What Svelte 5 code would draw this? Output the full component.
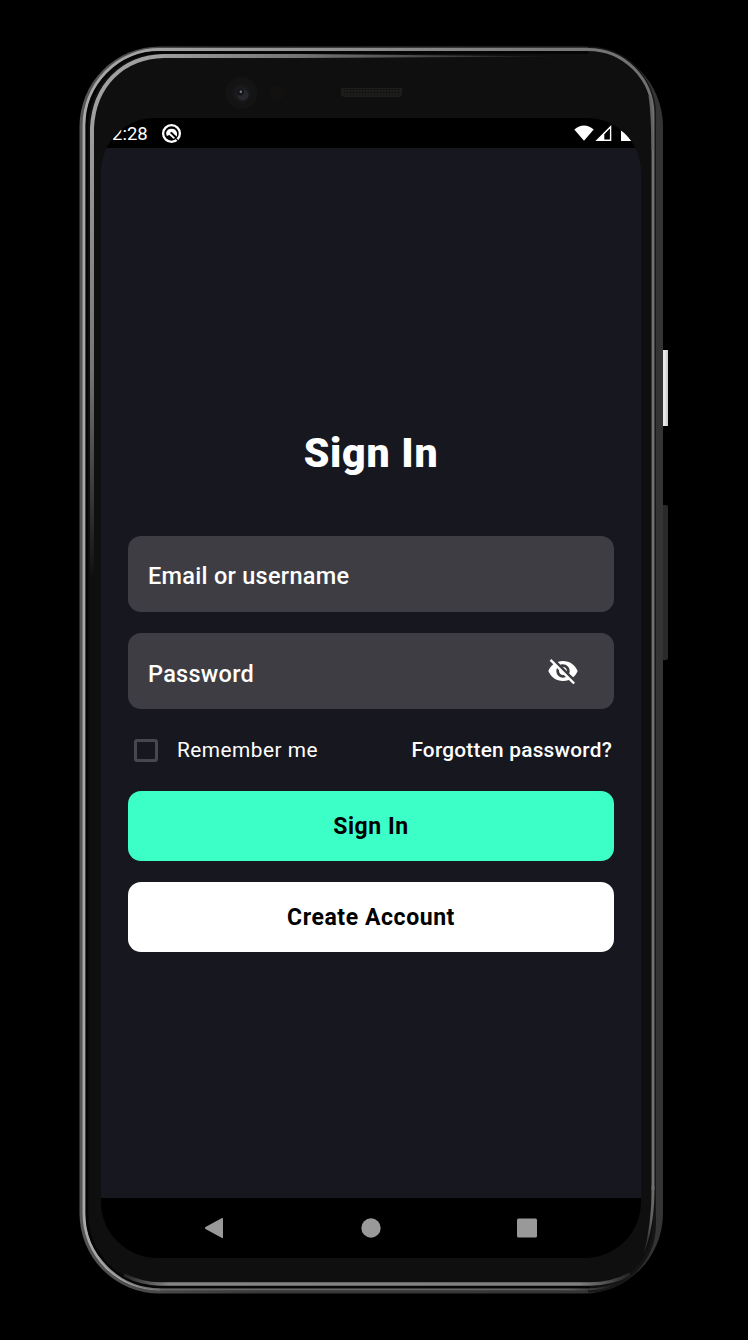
<script>
  let email = $state('Email or username');
  let secret = $state('Password');
  let remember = $state(false);
</script>

<main class="stage">
  <div class="phone">
    <svg class="frame" viewBox="0 0 748 1340" aria-hidden="true">
      <defs>
        <linearGradient id="rim" x1="0" y1="0" x2="1" y2="0">
          <stop offset="0" stop-color="#a8a8a8" />
          <stop offset=".5" stop-color="#8c8c8c" />
          <stop offset="1" stop-color="#707070" />
        </linearGradient>
        <linearGradient id="edge" x1="0" y1="0" x2="1" y2="0">
          <stop offset="0" stop-color="#555" />
          <stop offset=".3" stop-color="#393939" />
          <stop offset="1" stop-color="#343434" />
        </linearGradient>
        <linearGradient id="glowLeft" gradientUnits="userSpaceOnUse" x1="0" y1="120" x2="0" y2="575">
          <stop offset="0" stop-color="#a0a0a0" />
          <stop offset=".55" stop-color="#757575" />
          <stop offset="1" stop-color="#111" />
        </linearGradient>
        <linearGradient id="glowTop" gradientUnits="userSpaceOnUse" x1="150" y1="0" x2="565" y2="0">
          <stop offset="0" stop-color="#a0a0a0" />
          <stop offset=".5" stop-color="#626262" />
          <stop offset="1" stop-color="#111" />
        </linearGradient>
        <linearGradient id="glowBottom" gradientUnits="userSpaceOnUse" x1="124" y1="0" x2="630" y2="0">
          <stop offset="0" stop-color="#222" />
          <stop offset=".09" stop-color="#858585" />
          <stop offset=".9" stop-color="#808080" />
          <stop offset="1" stop-color="#222" />
        </linearGradient>
        <linearGradient id="glowRight" gradientUnits="userSpaceOnUse" x1="0" y1="1185" x2="0" y2="1256">
          <stop offset="0" stop-color="#707070" />
          <stop offset=".5" stop-color="#606060" />
          <stop offset="1" stop-color="#151515" />
        </linearGradient>
        <linearGradient id="under" gradientUnits="userSpaceOnUse" x1="100" y1="0" x2="653" y2="0">
          <stop offset="0" stop-color="#9a9a9a" />
          <stop offset=".12" stop-color="#666" />
          <stop offset=".85" stop-color="#606060" />
          <stop offset=".93" stop-color="#151515" />
          <stop offset="1" stop-color="#151515" />
        </linearGradient>
        <linearGradient id="key" x1="0" y1="0" x2="1" y2="0">
          <stop offset="0" stop-color="#b8b8b8" />
          <stop offset=".5" stop-color="#f2eeee" />
          <stop offset="1" stop-color="#c8c8c8" />
        </linearGradient>
        <radialGradient id="lens">
          <stop offset="0" stop-color="#202126" />
          <stop offset=".45" stop-color="#19191c" />
          <stop offset=".6" stop-color="#141415" />
          <stop offset="1" stop-color="#141313" />
        </radialGradient>
        <pattern id="mesh" width="3" height="3" patternUnits="userSpaceOnUse">
          <rect width="3" height="3" fill="#151514" />
          <circle cx="1" cy="1" r=".8" fill="#292826" />
        </pattern>
      </defs>
      <rect x="660" y="350" width="8" height="76" fill="url(#key)" />
      <rect x="660" y="505" width="8" height="155" rx="2" fill="#2a2a2a" />
      <rect x="79.5" y="46.5" width="583.5" height="1247" rx="80" fill="url(#edge)" />
      <path d="M588 49.500A65 65 0 0 1 653 114.500V1224A65 65.500 0 0 1 588 1289.500" fill="none" stroke="#171717" stroke-width="6" />
      <path d="M159.500 49.500H588A65 65 0 0 1 653 114.500V1224A65 65.500 0 0 1 588 1289.500H159.500A76 76 0 0 1 83.500 1213.500V125.500A76 76 0 0 1 159.500 49.500Z" fill="#0f0f10" />
      <path d="M159.500 1289A75.500 75.500 0 0 1 84 1213.500V125.500A75.500 76 0 0 1 159.500 49.500H588A65 65 0 0 1 653 114.500V1190" fill="none" stroke="url(#rim)" stroke-width="2.900" />
      <path d="M100 1258A76 76 0 0 0 159.500 1289.200H588A65 65 0 0 0 654 1224V1190" fill="none" stroke="url(#under)" stroke-width="2" />
      <path d="M590 1287H159.500A73 73.500 0 0 1 87 1213.500V125.500A73 73 0 0 1 159.500 52.500H588" fill="none" stroke="#050505" stroke-width="2.500" />
      <path d="M92 575V128C94 86 122 57 164 56" fill="none" stroke="url(#glowLeft)" stroke-width="4" />
      <path d="M163 54H300L565 56.500L300 58H163Z" fill="url(#glowTop)" />
      <path d="M124 1275Q142 1284 160 1284H590Q612 1284 630 1274" fill="none" stroke="url(#glowBottom)" stroke-width="3.400" />
      <path d="M649.500 96Q652 110 652.500 150" fill="none" stroke="#626262" stroke-width="2" />
      <path d="M651.600 1186H654.400Q655 1226 643 1256Q652 1224 651.600 1186Z" fill="url(#glowRight)" />
      <path d="M341 88H402V93Q402 97 398 97H345Q341 97 341 93Z" fill="#1e1d1c" />
      <rect x="343" y="89" width="57" height="6.500" fill="url(#mesh)" />
      <circle cx="241.500" cy="93" r="16" fill="url(#lens)" />
      <circle cx="243" cy="95" r="5.500" fill="#27282e" />
      <circle cx="240.500" cy="92" r="3.500" fill="#15161a" />
      <circle cx="240.800" cy="91.800" r="1.200" fill="#777b80" />
      <circle cx="277" cy="93" r="8" fill="#121110" />
    </svg>

    <div class="screen">
      <header class="status">
        <span class="time">2:28</span>
        <svg class="badge" viewBox="0 0 20 20">
          <circle cx="10" cy="10" r="8" fill="none" stroke="#fff" stroke-width="2.200" />
          <path d="M4.800 9.500A5.400 5.400 0 0 1 15.300 9.500L15.100 13L10.300 8.600L8.400 9.400L13.500 14.200L11.800 14.900L8 11.500L5.500 12.300Z" fill="#fff" />
          <path d="M14.200 14.900L17.500 18" stroke="#000" stroke-width="1.200" />
        </svg>
        <div class="signals">
          <svg width="20" height="16" viewBox="0 0 20 16"><path d="M.3 4.500Q10-3.500 19.700 4.500L10 15.800Z" fill="#fff" /></svg>
          <svg width="17" height="16" viewBox="0 0 17 16">
            <path fill-rule="evenodd" d="M.4 16L16.300 0V16ZM9.300 14.600H14.900V3.600L9.300 9.200Z" fill="#fff" />
          </svg>
          <svg class="battery" width="11" height="12" viewBox="0 0 11 12"><path d="M0 1.500Q5 4.500 10.500 12H0Z" fill="#fff" /></svg>
        </div>
      </header>

      <section class="content">
        <h1>Sign In</h1>
        <div class="field"><span>{email}</span></div>
        <div class="field">
          <span>{secret}</span>
          <svg width="32" height="32" viewBox="0 0 24 24" fill="#fff">
            <path d="M12 7c2.760 0 5 2.240 5 5 0 .65-.13 1.260-.36 1.830l2.920 2.920c1.510-1.260 2.700-2.890 3.430-4.750-1.730-4.390-6-7.500-11-7.500-1.400 0-2.740.25-3.980.7l2.160 2.160C10.740 7.130 11.350 7 12 7zM2 4.270l2.280 2.280.46.46C3.080 8.300 1.780 10.020 1 12c1.730 4.390 6 7.500 11 7.500 1.550 0 3.030-.3 4.380-.84l.42.42L19.730 22 21 20.730 3.270 3 2 4.270zM7.530 9.800l1.550 1.550c-.05.21-.08.43-.08.65 0 1.660 1.340 3 3 3 .22 0 .44-.03.65-.08l1.550 1.550c-.67.33-1.410.53-2.200.53-2.760 0-5-2.240-5-5 0-.79.2-1.530.53-2.200zm4.310-.78l3.150 3.150.02-.16c0-1.660-1.340-3-3-3l-.17.01z" />
          </svg>
        </div>
        <div class="options">
          <label><input type="checkbox" bind:checked={remember} /><span>Remember me</span></label>
          <span class="forgot">Forgotten password?</span>
        </div>
        <button class="primary">Sign In</button>
        <button class="secondary">Create Account</button>
      </section>

      <nav>
        <svg width="20" height="22" viewBox="0 0 20 22"><path d="M1.500 10L18 1Q19 .6 19 1.600V20.400Q19 21.400 18 21L1.500 12Q0 11 1.500 10Z" /></svg>
        <svg width="20" height="20" viewBox="0 0 20 20"><circle cx="10" cy="10" r="9.700" /></svg>
        <svg width="20" height="20" viewBox="0 0 20 20"><rect y=".5" width="20" height="19" rx="1.500" /></svg>
      </nav>
    </div>
  </div>
</main>

<style>
  :global(body) { background: #000; }
  .stage { width: 748px; height: 1340px; background: #000; overflow: hidden; font-family: Roboto, sans-serif; color: #fff; }
  .phone { position: relative; height: 1340px; padding: 118px 107px 82px 101px; box-sizing: border-box; }
  .frame { position: absolute; inset: 0; width: 748px; height: 1340px; }
  .screen { position: relative; height: 1140px; display: flex; flex-direction: column; overflow: hidden; border-radius: 54px 54px 56px 56px; background: #17171f; }
  .status { height: 30px; flex: none; display: flex; align-items: center; background: #000; padding: 0 9px 0 11px; }
  .time { width: 49px; font-size: 18.500px; line-height: 30px; padding-top: 1px; }
  .badge { width: 21px; height: 21px; }
  .signals { margin-left: auto; display: flex; align-items: flex-end; gap: 1px; height: 16px; }
  .battery { margin-left: 8px; }
  .content { flex: 1; padding: 282px 27px 0; display: flex; flex-direction: column; }
  h1 { margin: 0 0 59px; height: 47px; line-height: 47px; text-align: center; font-size: 41px; font-weight: 900; letter-spacing: .75px; }
  .field { height: 76px; flex: none; margin-bottom: 21.400px; padding: 0 35px 0 20px; box-sizing: border-box; border-radius: 13px; background: #3e3d43; display: flex; align-items: center; justify-content: space-between; font-size: 23.500px; font-weight: 500; letter-spacing: .28px; }
  .field span { padding-top: 4px; }
  .field + .field span { padding-top: 5px; }
  .options { height: 82px; margin-top: -21.400px; display: flex; align-items: center; justify-content: space-between; padding: 0 2px 0 6px; font-size: 20.800px; letter-spacing: .24px; }
  label { display: flex; align-items: center; gap: 19px; letter-spacing: .5px; }
  input { appearance: none; margin: 0; width: 24px; height: 23px; border: 3px solid #48464f; border-radius: 3px; }
  .forgot { font-weight: 500; }
  button { height: 69.500px; flex: none; border: 0; border-radius: 13px; padding: 1px 0 0; font: 700 23px Roboto, sans-serif; letter-spacing: .58px; color: #000; }
  .primary { background: #3cffc8; margin-bottom: 21.500px; }
  .secondary { background: #fff; }
  nav { height: 60px; flex: none; background: #000; display: flex; align-items: center; justify-content: space-between; padding: 0 104px 0 103px; fill: #999; }
</style>
